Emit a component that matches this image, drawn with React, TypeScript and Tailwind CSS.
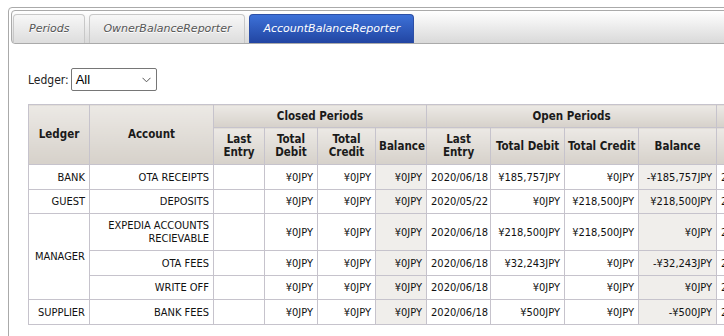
const font = { fontFamily: '"DejaVu Sans Condensed", Tahoma, "Liberation Sans", sans-serif' };

type Row = {
  ledger?: string;
  span?: number;
  account: string;
  tall?: boolean;
  closed: [string, string, string, string];
  open: [string, string, string, string];
};

const rows: Row[] = [
  {
    ledger: "BANK",
    account: "OTA RECEIPTS",
    closed: ["", "¥0JPY", "¥0JPY", "¥0JPY"],
    open: ["2020/06/18", "¥185,757JPY", "¥0JPY", "-¥185,757JPY"],
  },
  {
    ledger: "GUEST",
    account: "DEPOSITS",
    closed: ["", "¥0JPY", "¥0JPY", "¥0JPY"],
    open: ["2020/05/22", "¥0JPY", "¥218,500JPY", "¥218,500JPY"],
  },
  {
    ledger: "MANAGER",
    span: 3,
    account: "EXPEDIA ACCOUNTS RECIEVABLE",
    tall: true,
    closed: ["", "¥0JPY", "¥0JPY", "¥0JPY"],
    open: ["2020/06/18", "¥218,500JPY", "¥218,500JPY", "¥0JPY"],
  },
  {
    account: "OTA FEES",
    closed: ["", "¥0JPY", "¥0JPY", "¥0JPY"],
    open: ["2020/06/18", "¥32,243JPY", "¥0JPY", "-¥32,243JPY"],
  },
  {
    account: "WRITE OFF",
    closed: ["", "¥0JPY", "¥0JPY", "¥0JPY"],
    open: ["2020/06/18", "¥0JPY", "¥0JPY", "¥0JPY"],
  },
  {
    ledger: "SUPPLIER",
    account: "BANK FEES",
    closed: ["", "¥0JPY", "¥0JPY", "¥0JPY"],
    open: ["2020/06/18", "¥500JPY", "¥0JPY", "-¥500JPY"],
  },
];

const th =
  "border border-[#c6c3cc] bg-gradient-to-b from-[#ece9e5] to-[#d6d1ca] px-[3px] py-0 text-center font-bold text-[11.5px] leading-[13px] text-[#1a1a1a]";
const td = "border border-[#c6c3cc] px-[4px] py-0 text-right text-[11px] leading-[13px] text-[#111]";
const bal = `${td} bg-[#f0eeeb]`;

function Tab({ label, active, wide }: { label: string; active?: boolean; wide?: boolean }) {
  return (
    <div
      className={
        active
          ? "h-[29px] rounded-t-[4px] border border-b-0 border-[#2c4fa6] bg-gradient-to-b from-[#3d71d8] to-[#2245a2] px-[13px] flex items-center text-[11px] italic text-white"
          : `h-[29px] rounded-t-[4px] border border-b-0 border-[#c8c8c8] bg-gradient-to-b from-[#f7f7f7] to-[#dddddd] ${wide ? "px-[15px]" : "px-[13px]"} flex items-center text-[11px] italic text-[#555] [text-shadow:0_1px_0_#fff]`
      }
      style={{ fontFamily: '"DejaVu Sans", Verdana, sans-serif' }}
    >
      {label}
    </div>
  );
}

function Header() {
  const groups = [
    { le: <>Last<br />Entry</>, td: <>Total<br />Debit</>, tc: <>Total<br />Credit</> },
    { le: <>Last<br />Entry</>, td: <>Total Debit</>, tc: <>Total Credit</> },
    { le: <>Last<br />Entry</>, td: <>Total Debit</>, tc: <>Total Credit</> },
  ];
  return (
    <thead>
      <tr className="h-[23px]">
        <th rowSpan={2} className={th}>Ledger</th>
        <th rowSpan={2} className={th}>Account</th>
        <th colSpan={4} className={th}>Closed Periods</th>
        <th colSpan={4} className={th}>Open Periods</th>
        <th colSpan={4} className={th}>All Periods</th>
      </tr>
      <tr className="h-[37px]">
        {groups.map((g, i) => [
          <th key={`a${i}`} className={th}>{g.le}</th>,
          <th key={`b${i}`} className={`${th} whitespace-nowrap`}>{g.td}</th>,
          <th key={`c${i}`} className={`${th} whitespace-nowrap`}>{g.tc}</th>,
          <th key={`d${i}`} className={th}>Balance</th>,
        ])}
      </tr>
    </thead>
  );
}

export default function App() {
  return (
    <div className="w-[724px] h-[336px] overflow-hidden bg-white" style={font}>
      <div className="ml-[8px] mt-[7px] w-[1100px] h-[400px] rounded-[4px] border border-[#aaaaaa] p-[2px]">
        {/* Tab bar */}
        <div className="h-[34px] rounded-[4px] border border-[#aaaaaa] bg-gradient-to-b from-white to-[#d9d9d9] flex items-end gap-[4px] pl-[1px]">
          <Tab label="Periods" wide />
          <Tab label="OwnerBalanceReporter" />
          <Tab label="AccountBalanceReporter" active />
        </div>

        {/* Content */}
        <div className="pl-[17px] pt-[24px]">
          <div className="flex items-center gap-[2px] text-[12px] text-[#222]">
            <span>Ledger:</span>
            <div className="relative h-[23px] w-[86px] rounded-[2px] border border-[#767676] bg-white pl-[4px] flex items-center">
              <span className="text-[13px] text-black" style={{ fontFamily: '"Liberation Sans", Arial, sans-serif' }}>
                All
              </span>
              <svg className="absolute right-[5px] top-[8px]" width="9" height="6" viewBox="0 0 9 6" fill="none">
                <path d="M0.5 0.8 L4.5 4.8 L8.5 0.8" stroke="#555" strokeWidth="1" />
              </svg>
            </div>
          </div>

          <table className="mt-[13px] border-collapse table-fixed w-[880px]">
            <colgroup>
              <col className="w-[61px]" />
              <col className="w-[124px]" />
              <col className="w-[51px]" />
              <col className="w-[53px]" />
              <col className="w-[58px]" />
              <col className="w-[51px]" />
              <col className="w-[64px]" />
              <col className="w-[74px]" />
              <col className="w-[74px]" />
              <col className="w-[78px]" />
              <col className="w-[64px]" />
              <col className="w-[74px]" />
              <col className="w-[74px]" />
              <col className="w-[78px]" />
            </colgroup>
            <Header />
            <tbody>
              {rows.map((r, i) => (
                <tr key={i} className={r.tall ? "h-[37px]" : i === 1 || i === 4 ? "h-[24px]" : "h-[25px]"}>
                  {r.ledger && (
                    <td rowSpan={r.span ?? 1} className={td}>
                      {r.ledger}
                    </td>
                  )}
                  <td className={td}>{r.account}</td>
                  <td className={td}>{r.closed[0]}</td>
                  <td className={td}>{r.closed[1]}</td>
                  <td className={td}>{r.closed[2]}</td>
                  <td className={bal}>{r.closed[3]}</td>
                  <td className={td}>{r.open[0]}</td>
                  <td className={td}>{r.open[1]}</td>
                  <td className={td}>{r.open[2]}</td>
                  <td className={bal}>{r.open[3]}</td>
                  <td className={`${td} text-left`}>{r.open[0]}</td>
                  <td className={td}>{r.open[1]}</td>
                  <td className={td}>{r.open[2]}</td>
                  <td className={bal}>{r.open[3]}</td>
                </tr>
              ))}
            </tbody>
          </table>
        </div>
      </div>
    </div>
  );
}
